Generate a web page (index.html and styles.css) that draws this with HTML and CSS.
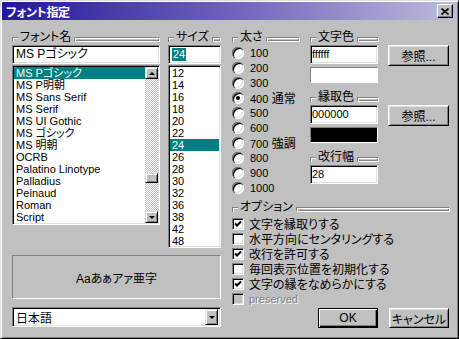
FILE: index.html
```html
<!DOCTYPE html>
<html lang="ja">
<head>
  <meta charset="UTF-8">
  <title>フォント指定</title>
  <link rel="stylesheet" href="styles.css">
</head>
<body>

  <div class="window">
    <!-- タイトルバー -->
    <div class="titlebar">
      <span class="title">フォント指定</span>
      <span class="close-btn">
        <svg width="8" height="7" viewBox="0 0 8 7"><path d="M0.5 0.5 L7.5 6.5 M7.5 0.5 L0.5 6.5" stroke="#000" stroke-width="1.6"/></svg>
      </span>
    </div>

    <div class="dialog">
      <!-- 左側：フォント名・サイズ・プレビュー -->
      <div class="left-pane">
        <div class="top-row">
          <div class="group font-group">
            <div class="heading"><span class="corner"></span><span class="label">フォント名</span><span class="bar"></span></div>
            <div class="field">MS Pゴシック</div>
            <div class="listbox font-list">
              <ul class="items">
                <li class="selected">MS Pゴシック</li>
                <li>MS P明朝</li>
                <li>MS Sans Serif</li>
                <li>MS Serif</li>
                <li>MS UI Gothic</li>
                <li>MS ゴシック</li>
                <li>MS 明朝</li>
                <li>OCRB</li>
                <li>Palatino Linotype</li>
                <li>Palladius</li>
                <li>Peinaud</li>
                <li>Roman</li>
                <li>Script</li>
              </ul>
              <div class="scrollbar">
                <span class="arrow"><span class="tri-up"></span></span>
                <span class="track"><span class="thumb"></span></span>
                <span class="arrow"><span class="tri-down"></span></span>
              </div>
            </div>
          </div>

          <div class="group size-group">
            <div class="heading"><span class="corner"></span><span class="label">サイズ</span><span class="bar"></span></div>
            <div class="field size-field"><span class="sel-text">24</span></div>
            <div class="listbox size-list">
              <ul class="items">
                <li>12</li>
                <li>14</li>
                <li>16</li>
                <li>18</li>
                <li>20</li>
                <li>22</li>
                <li class="selected">24</li>
                <li>26</li>
                <li>28</li>
                <li>30</li>
                <li>32</li>
                <li>36</li>
                <li>38</li>
                <li>42</li>
                <li>48</li>
              </ul>
            </div>
          </div>
        </div>

        <div class="preview">Aaあぁアァ亜字</div>

        <div class="combo">
          <span>日本語</span>
          <span class="drop-btn"><span class="tri-down"></span></span>
        </div>
      </div>

      <!-- 右側：太さ・色・オプション -->
      <div class="right-pane">
        <div class="right-top">
          <div class="group weight-group">
            <div class="heading"><span class="corner"></span><span class="label">太さ</span><span class="bar"></span></div>
            <div class="radios">
              <div class="option-row"><span class="radio"></span><span class="num">100</span></div>
              <div class="option-row"><span class="radio"></span><span class="num">200</span></div>
              <div class="option-row"><span class="radio"></span><span class="num">300</span></div>
              <div class="option-row"><span class="radio checked"></span><span><span class="num">400</span> 通常</span></div>
              <div class="option-row"><span class="radio"></span><span class="num">500</span></div>
              <div class="option-row"><span class="radio"></span><span class="num">600</span></div>
              <div class="option-row"><span class="radio"></span><span><span class="num">700</span> 強調</span></div>
              <div class="option-row"><span class="radio"></span><span class="num">800</span></div>
              <div class="option-row"><span class="radio"></span><span class="num">900</span></div>
              <div class="option-row"><span class="radio"></span><span class="num">1000</span></div>
            </div>
          </div>

          <div class="group color-group">
            <div class="heading short"><span class="corner"></span><span class="label">文字色</span><span class="bar"></span></div>
            <div class="color-row">
              <div class="color-col">
                <div class="field code">ffffff</div>
                <div class="swatch white"></div>
              </div>
              <button class="btn ref-btn">参照...</button>
            </div>

            <div class="heading short spaced"><span class="corner"></span><span class="label">縁取色</span><span class="bar"></span></div>
            <div class="color-row">
              <div class="color-col">
                <div class="field code">000000</div>
                <div class="swatch black"></div>
              </div>
              <button class="btn ref-btn">参照...</button>
            </div>

            <div class="heading short spaced"><span class="corner"></span><span class="label">改行幅</span><span class="bar"></span></div>
            <div class="color-col">
              <div class="field code">28</div>
            </div>
          </div>
        </div>

        <div class="group options">
          <div class="heading"><span class="corner"></span><span class="label">オプション</span><span class="bar"></span></div>
          <div class="checks">
            <div class="option-row"><span class="check on"></span><span>文字を縁取りする</span></div>
            <div class="option-row"><span class="check"></span><span>水平方向にセンタリングする</span></div>
            <div class="option-row"><span class="check on"></span><span>改行を許可する</span></div>
            <div class="option-row"><span class="check"></span><span>毎回表示位置を初期化する</span></div>
            <div class="option-row"><span class="check on"></span><span>文字の縁をなめらかにする</span></div>
            <div class="option-row disabled"><span class="check"></span><span class="num">preserved</span></div>
          </div>
        </div>

        <div class="actions">
          <button class="btn default">OK</button>
          <button class="btn">キャンセル</button>
        </div>
      </div>
    </div>
  </div>

</body>
</html>
```

FILE: styles.css
```css
/* リセット */
* {
  margin: 0;
  padding: 0;
  box-sizing: border-box;
}
body {
  background: #c0c0c0;
  font-family: "Liberation Sans", "Noto Sans CJK JP", sans-serif;
  font-size: 12px;
  font-feature-settings: "palt";
  color: #000;
}
ul {
  list-style: none;
}
button {
  font: inherit;
  color: inherit;
}

/* ウィンドウ枠 */
.window {
  width: 459px;
  height: 339px;
  padding: 1px;
  background: #c0c0c0;
  border: 1px solid;
  border-color: #dfdfdf #000 #000 #dfdfdf;
  box-shadow: inset 1px 1px #fff, inset -1px -1px #808080;
}

/* タイトルバー */
.titlebar {
  height: 18px;
  display: flex;
  align-items: center;
  justify-content: space-between;
  padding: 0 4px 0 4px;
  background: linear-gradient(90deg, #22179c 0%, #6e62bc 50%, #bcbcdc 100%);
}
.title {
  color: #fff;
  font-weight: bold;
  letter-spacing: -0.3px;
}
.close-btn {
  width: 16px;
  height: 14px;
  display: flex;
  align-items: center;
  justify-content: center;
  background: #c0c0c0;
  border: 1px solid;
  border-color: #fff #000 #000 #fff;
  box-shadow: inset -1px -1px #808080;
}

/* 本体 */
.dialog {
  display: flex;
  gap: 11px;
  padding: 10px 0 0 10px;
}
.left-pane {
  width: 209px;
}
.top-row {
  display: flex;
  gap: 8px;
}
.font-group {
  width: 148px;
}
.size-group {
  width: 53px;
}

/* グループ見出し（┌ ラベル ═══） */
.heading {
  display: flex;
  height: 14px;
  line-height: 14px;
}
.corner {
  width: 6px;
  height: 5px;
  margin-top: 7px;
  border-top: 1px solid #808080;
  border-left: 1px solid #808080;
  box-shadow: inset 1px 1px #fff;
}
.label {
  padding: 0 3px 0 2px;
  white-space: nowrap;
}
.bar {
  flex: 1;
  height: 5px;
  margin-top: 7px;
  border: 1px solid;
  border-color: #808080 #fff #fff #808080;
  box-shadow: inset 1px 1px #fff, inset -1px -1px #808080;
}

/* テキストボックス */
.field {
  height: 19px;
  margin-top: 1px;
  padding: 0 3px;
  line-height: 17px;
  background: #fff;
  border: 1px solid;
  border-color: #808080 #fff #fff #808080;
  box-shadow: inset 1px 1px #000, inset -1px -1px #dfdfdf;
  white-space: nowrap;
  overflow: hidden;
}
.size-field {
  padding-top: 2px;
  line-height: 13px;
}
.sel-text {
  display: inline-block;
  background: #008080;
  color: #fff;
  font-size: 11px;
  padding: 0 1px;
}
.field.code {
  padding-left: 1px;
  font-size: 11px;
}

/* リストボックス */
.listbox {
  display: flex;
  margin-top: 1px;
  padding: 1px;
  background: #fff;
  border: 1px solid;
  border-color: #808080 #fff #fff #808080;
  box-shadow: inset 1px 1px #000, inset -1px -1px #dfdfdf;
  overflow: hidden;
}
.font-list {
  height: 160px;
}
.size-list {
  height: 183px;
}
.items {
  flex: 1;
  font-size: 11px;
}
.items li {
  height: 12px;
  line-height: 12px;
  padding-left: 2px;
  white-space: nowrap;
  overflow: hidden;
}
.items li.selected {
  background: #008080;
  color: #fff;
}
.num {
  font-size: 11px;
}

/* スクロールバー */
.scrollbar {
  width: 13px;
  display: flex;
  flex-direction: column;
}
.arrow,
.thumb,
.drop-btn {
  display: flex;
  align-items: center;
  justify-content: center;
  background: #c0c0c0;
  border: 1px solid;
  border-color: #dfdfdf #000 #000 #dfdfdf;
  box-shadow: inset 1px 1px #fff, inset -1px -1px #808080;
}
.arrow {
  height: 12px;
}
.track {
  flex: 1;
  background: repeating-conic-gradient(#c0c0c0 0 25%, #fff 0 50%) 0 0 / 2px 2px;
}
.thumb {
  height: 10px;
  margin-top: 94px;
}
.tri-up {
  border-left: 3px solid transparent;
  border-right: 3px solid transparent;
  border-bottom: 3px solid #000;
}
.tri-down {
  border-left: 3px solid transparent;
  border-right: 3px solid transparent;
  border-top: 3px solid #000;
}

/* プレビュー */
.preview {
  height: 44px;
  margin-top: 7px;
  display: flex;
  align-items: center;
  justify-content: center;
  border: 1px solid;
  border-color: #808080 #fff #fff #808080;
}

/* 言語コンボ */
.combo {
  height: 20px;
  margin-top: 8px;
  display: flex;
  align-items: center;
  padding: 0 2px 0 3px;
  background: #fff;
  border: 1px solid;
  border-color: #808080 #fff #fff #808080;
  box-shadow: inset 1px 1px #000, inset -1px -1px #dfdfdf;
}
.drop-btn {
  width: 13px;
  height: 16px;
  margin-left: auto;
}

/* 右側 */
.right-pane {
  width: 218px;
}
.right-top {
  display: flex;
  gap: 10px;
}
.weight-group {
  width: 68px;
}
.color-group {
  width: 139px;
}
.heading.short .bar {
  max-width: 22px;
}
.heading.spaced {
  margin-top: 7px;
}

/* ラジオ・チェック行 */
.radios,
.checks {
  margin-top: 1px;
}
.option-row {
  height: 15px;
  display: flex;
  align-items: center;
  gap: 6px;
  white-space: nowrap;
}
.checks .option-row {
  gap: 5px;
}
.radio {
  width: 12px;
  height: 12px;
  flex: none;
  border-radius: 50%;
  background: #fff;
  box-shadow: inset 1px 1px #808080, inset 2px 2px #000, inset -1px -1px #fff, inset -2px -2px #dfdfdf;
  display: flex;
  align-items: center;
  justify-content: center;
}
.radio.checked::after {
  content: "";
  width: 4px;
  height: 4px;
  border-radius: 50%;
  background: #000;
}
.check {
  width: 12px;
  height: 12px;
  flex: none;
  background: #fff;
  border: 1px solid;
  border-color: #808080 #fff #fff #808080;
  box-shadow: inset 1px 1px #000, inset -1px -1px #dfdfdf;
}
.check.on {
  background: #fff url("data:image/svg+xml,%3Csvg xmlns='http://www.w3.org/2000/svg' width='12' height='12'%3E%3Cpath d='M3 5.5 L5 7.5 L9 3.5' fill='none' stroke='%23000' stroke-width='2'/%3E%3C/svg%3E") center / 12px 12px no-repeat;
}
.option-row.disabled {
  color: #808080;
  text-shadow: 1px 1px #fff;
}
.option-row.disabled .check {
  background: #c0c0c0;
}

/* 色設定 */
.color-row {
  display: flex;
  gap: 10px;
}
.color-col {
  width: 68px;
}
.swatch {
  height: 16px;
  margin-top: 3px;
  border: 1px solid;
  border-color: #808080 #fff #fff #808080;
}
.swatch.white {
  background: #fff;
}
.swatch.black {
  background: #000;
}

/* ボタン */
.btn {
  background: #c0c0c0;
  border: 1px solid;
  border-color: #fff #000 #000 #fff;
  box-shadow: inset 1px 1px #dfdfdf, inset -1px -1px #808080;
  cursor: pointer;
}
.ref-btn {
  width: 61px;
  height: 21px;
  margin-top: 1px;
  align-self: flex-start;
}
.btn.default {
  border-color: #000;
  box-shadow: inset 1px 1px #fff, inset -1px -1px #000, inset -2px -2px #808080;
}

/* オプション */
.options {
  margin-top: 5px;
}
.checks {
  margin-top: 2px;
}
.actions {
  display: flex;
  justify-content: flex-end;
  gap: 11px;
  margin-top: 2px;
  padding-right: 1px;
}
.actions .btn {
  width: 60px;
  height: 20px;
}
```
